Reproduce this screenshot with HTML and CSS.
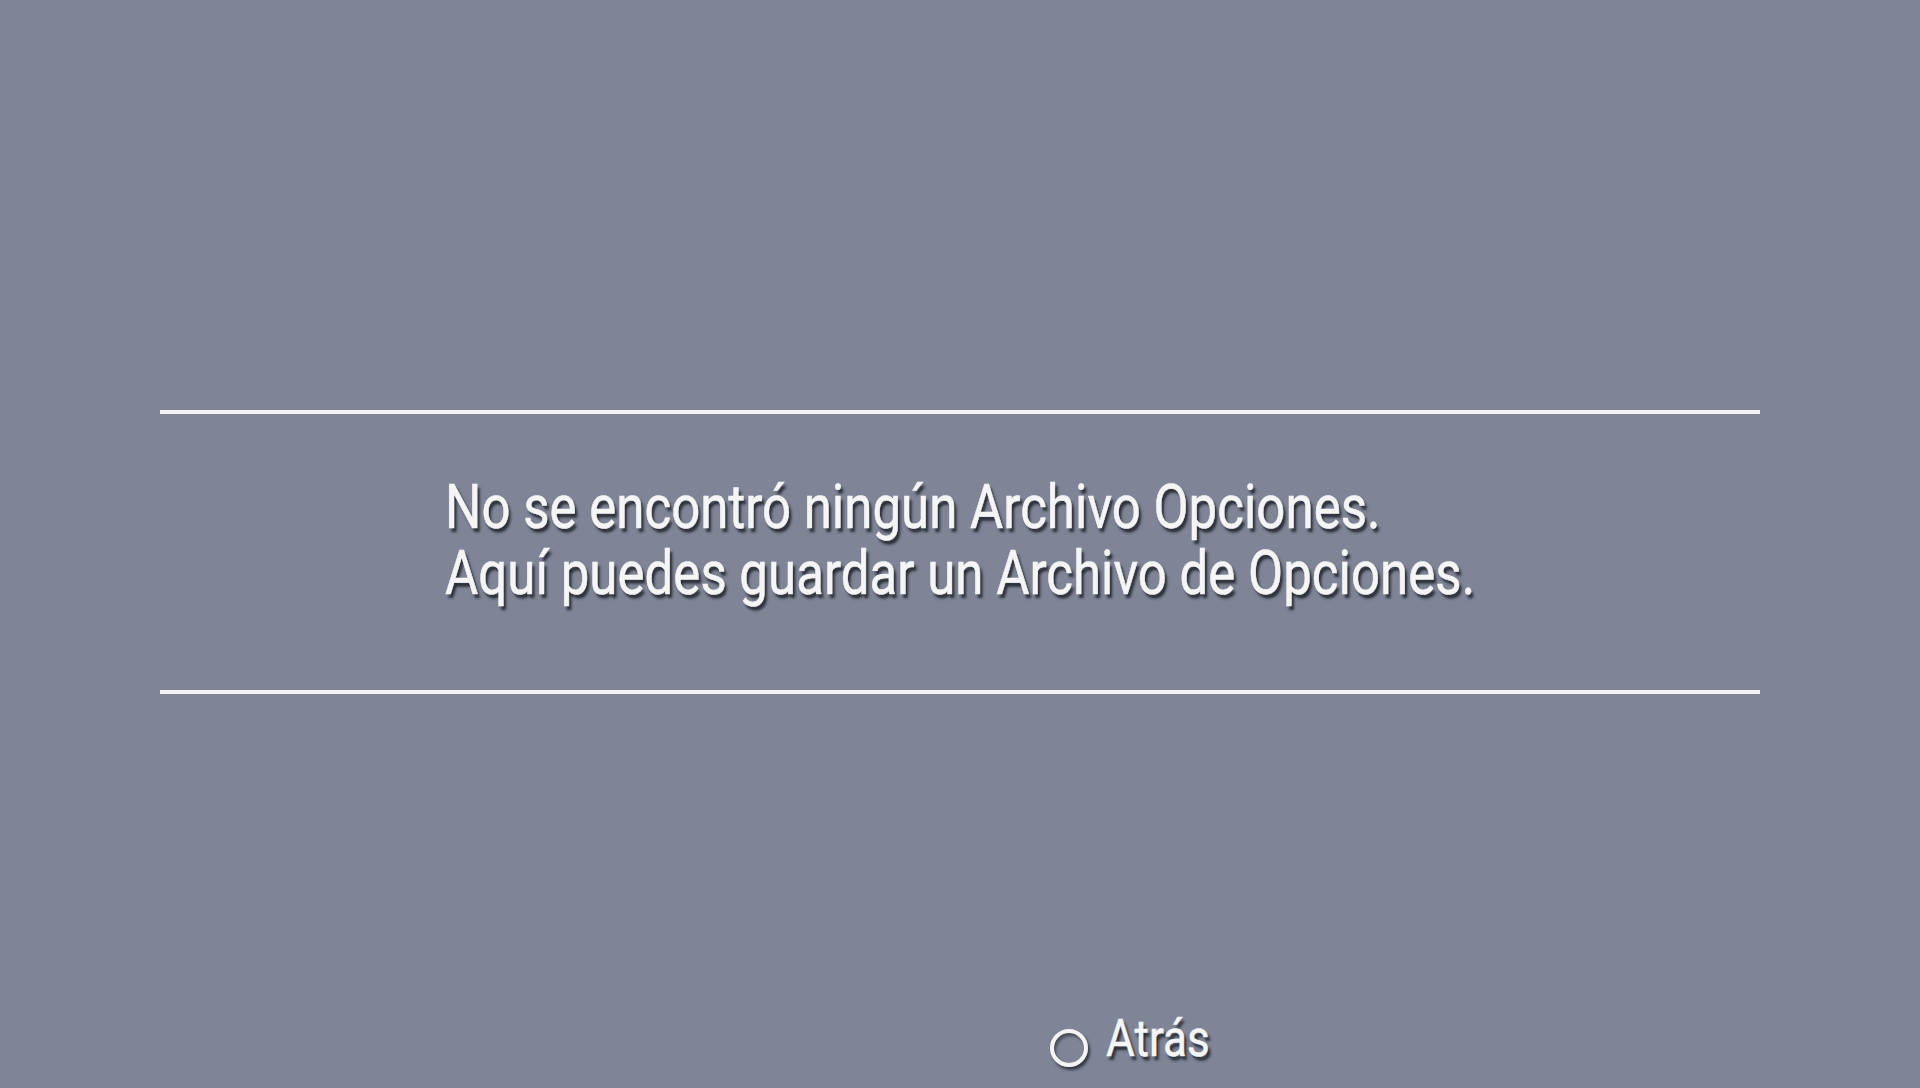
FILE: index.html
```html
<!DOCTYPE html>
<html lang="es">
<head>
<meta charset="utf-8">
<link rel="stylesheet" href="styles.css">
</head>
<body>
<div class="screen">
  <div class="panel">
    <div class="message">
      <div class="line">No se encontró ningún Archivo Opciones.</div>
      <div class="line">Aquí puedes guardar un Archivo de Opciones.</div>
    </div>
  </div>
  <div class="footer">
    <span class="circle"></span>
    <span class="label">Atrás</span>
  </div>
</div>
</body>
</html>
```
FILE: styles.css
```css
html, body {
  margin: 0;
  padding: 0;
  width: 1920px;
  height: 1088px;
  overflow: hidden;
  background: #7f8596;
}
.screen {
  width: 1920px;
  height: 1088px;
  display: flex;
  flex-direction: column;
  font-family: Roboto, "Liberation Sans", sans-serif;
  color: #f5f5f5;
}
.panel {
  flex-shrink: 0;
  margin: 410px 160px 0 160px;
  height: 216px;
  border-top: 4px solid #f4f4f4;
  border-bottom: 4px solid #f4f4f4;
  padding-left: 285px;
  padding-top: 60px;
  box-sizing: content-box;
}
.message {
  display: inline-block;
  transform: scaleX(0.823);
  transform-origin: left top;
  white-space: nowrap;
}
.line {
  font-size: 62px;
  font-weight: 400;
  line-height: 66px;
  -webkit-text-stroke: 0.6px #f5f5f5;
  text-shadow: 3px 4px 3px rgba(20, 22, 30, 0.8);
}
.footer {
  flex-shrink: 0;
  margin-top: 315px;
  height: 60px;
  padding-left: 1050px;
  display: flex;
  align-items: center;
  gap: 18px;
}
.circle {
  width: 30px;
  height: 30px;
  border: 4px solid #f4f4f4;
  border-radius: 50%;
  box-shadow: 2px 3px 3px rgba(20, 22, 30, 0.7), inset 2px 3px 3px rgba(20,22,30,0.5);
  margin-top: 18px;
}
.label {
  font-size: 52px;
  font-weight: 400;
  line-height: 60px;
  display: inline-block;
  transform: scaleX(0.85);
  transform-origin: left center;
  -webkit-text-stroke: 0.5px #f5f5f5;
  text-shadow: 3px 4px 3px rgba(20, 22, 30, 0.8);
}
```
